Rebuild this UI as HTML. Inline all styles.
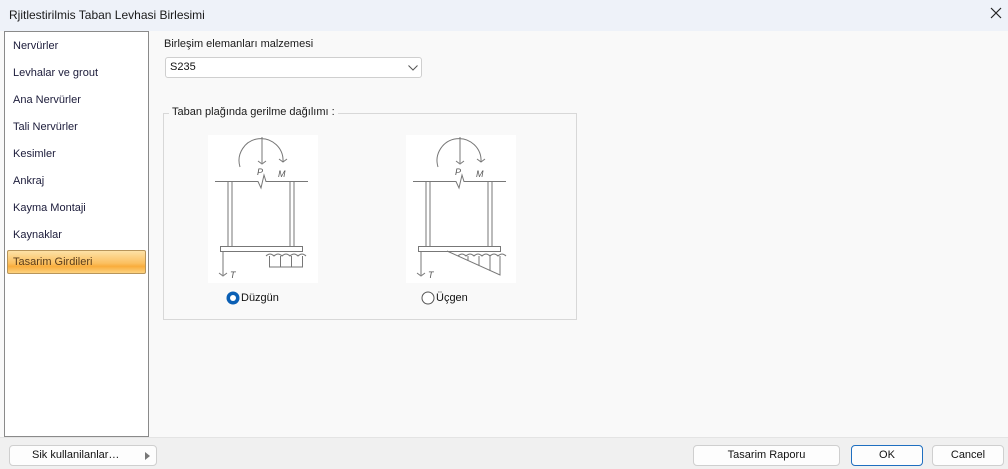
<!DOCTYPE html>
<html><head><meta charset="utf-8"><style>
*{margin:0;padding:0;box-sizing:border-box}
body{width:1008px;height:469px;overflow:hidden;background:#f9f9f9;font-family:"Segoe UI","Liberation Sans",sans-serif;font-size:11px;color:#111;position:relative}
.abs{position:absolute}
.title{left:0;top:0;width:1008px;height:31px;background:#eef2f9;}
.title span{position:absolute;left:9px;top:8px;font-size:12px;color:#1a1a1a}
.left{left:4px;top:31px;width:145px;height:406px;background:#fff;border:1px solid #8a8a8a}
.item{position:absolute;left:8px;font-size:11px;color:#1b1b3a}
.sel{left:2px;top:218px;width:139px;height:24px;border:1px solid #b8955a;border-radius:2px;background:linear-gradient(#fde1a6,#fbc061 55%,#f9ad3c 70%,#fcd27f)}
.bottom{left:0;top:437px;width:1008px;height:32px;background:#f0f0f0;border-top:1px solid #e4e4e4}
.btn{position:absolute;height:21px;border:1px solid #cfcfcf;border-radius:4px;background:#fdfdfd;text-align:center;line-height:19px;font-size:11px;color:#111}
.dd{left:165px;top:57px;width:257px;height:21px;border:1px solid #cfcfcf;border-radius:3px;background:#fff}
.grp{left:163px;top:113px;width:414px;height:207px;border:1px solid #d8d8d8}
</style></head><body>
<div class="abs title"><span>Rjitlestirilmis Taban Levhasi Birlesimi</span>
<svg class="abs" style="left:990px;top:7px" width="12" height="12"><path d="M1,1L11,11M11,1L1,11" stroke="#222" stroke-width="1.2"/></svg></div>
<div class="abs left">
<div class="item" style="top:8px">Nervürler</div>
<div class="item" style="top:35px">Levhalar ve grout</div>
<div class="item" style="top:62px">Ana Nervürler</div>
<div class="item" style="top:89px">Tali Nervürler</div>
<div class="item" style="top:116px">Kesimler</div>
<div class="item" style="top:143px">Ankraj</div>
<div class="item" style="top:170px">Kayma Montaji</div>
<div class="item" style="top:197px">Kaynaklar</div>
<div class="abs sel"></div>
<div class="item" style="top:224px;color:#5a3d1a">Tasarim Girdileri</div>
</div>
<div class="abs" style="left:164px;top:38px;color:#1a1a1a">Birleşim elemanları malzemesi</div>
<div class="abs dd"><span class="abs" style="left:4px;top:3px">S235</span>
<svg class="abs" style="left:242px;top:7px" width="10" height="6"><path d="M0.5,0.5L5,5L9.5,0.5" fill="none" stroke="#555"/></svg></div>
<div class="abs grp"></div>
<div class="abs" style="left:169px;top:106px;background:#f9f9f9;padding:0 3px;color:#1a1a1a">Taban plağında gerilme dağılımı :</div>

<svg class="abs" style="left:208px;top:135px" width="110" height="148" font-family="Liberation Sans" font-style="italic" font-size="9">
<rect width="110" height="148" fill="#fff"/>
<g fill="none" stroke="#777" stroke-width="1">
<path d="M32,32 A22,22 0 1 1 75,27"/><path d="M54,2V28M50,26l4,3l4,-3M71,24l4,3l4,-3"/>
<path d="M7,46.5H50L53,53L56,40L58,46.5H100"/>
<path d="M20,47V111M24,47V111M82,47V111M86,47V111"/>
<rect x="12.5" y="111.5" width="82" height="5"/>
<path d="M15,117V140M11,138l4,3l4,-3"/>
<path d="M61.5,121V132H94.5V121M72.5,121V132M83.5,121V132"/>
<path d="M58,121q4,-4 8,0q4,-4 8,0q4,-4 8,0q4,-4 8,0q4,-4 8,0"/>
</g>
<text x="49" y="40" fill="#555">P</text><text x="70" y="42" fill="#555">M</text><text x="22" y="143" fill="#555">T</text>
</svg>

<svg class="abs" style="left:406px;top:135px" width="110" height="148" font-family="Liberation Sans" font-style="italic" font-size="9">
<rect width="110" height="148" fill="#fff"/>
<g fill="none" stroke="#777" stroke-width="1">
<path d="M32,32 A22,22 0 1 1 75,27"/><path d="M54,2V28M50,26l4,3l4,-3M71,24l4,3l4,-3"/>
<path d="M7,46.5H50L53,53L56,40L58,46.5H100"/>
<path d="M20,47V111M24,47V111M82,47V111M86,47V111"/>
<rect x="12.5" y="111.5" width="82" height="5"/>
<path d="M15,117V140M11,138l4,3l4,-3"/>
<path d="M41,116L94,140V121M62,126V121M73,131V121M84,136V121"/>
<path d="M52,121q4,-4 8,0q4,-4 8,0q4,-4 8,0q4,-4 8,0q4,-4 8,0q4,-4 8,0"/>
</g>
<text x="49" y="40" fill="#555">P</text><text x="70" y="42" fill="#555">M</text><text x="22" y="143" fill="#555">T</text>
</svg>

<svg class="abs" style="left:226px;top:291px" width="14" height="14"><circle cx="7" cy="7" r="6.5" fill="#0a5fb4"/><circle cx="7" cy="7" r="3" fill="#fff"/></svg>
<div class="abs" style="left:241px;top:292px">Düzgün</div>
<svg class="abs" style="left:421px;top:291px" width="14" height="14"><circle cx="7" cy="7" r="6" fill="#fff" stroke="#555"/></svg>
<div class="abs" style="left:436px;top:292px">Üçgen</div>

<div class="abs bottom"></div>
<div class="btn" style="left:9px;top:445px;width:148px;text-align:left;padding-left:22px">Sik kullanilanlar…
<svg class="abs" style="left:135px;top:6px" width="6" height="8"><path d="M0,0L5,4L0,8Z" fill="#777"/></svg></div>
<div class="btn" style="left:693px;top:445px;width:147px">Tasarim Raporu</div>
<div class="btn" style="left:851px;top:445px;width:72px;border-color:#1f6fc0">OK</div>
<div class="btn" style="left:932px;top:445px;width:72px">Cancel</div>
</body></html>
